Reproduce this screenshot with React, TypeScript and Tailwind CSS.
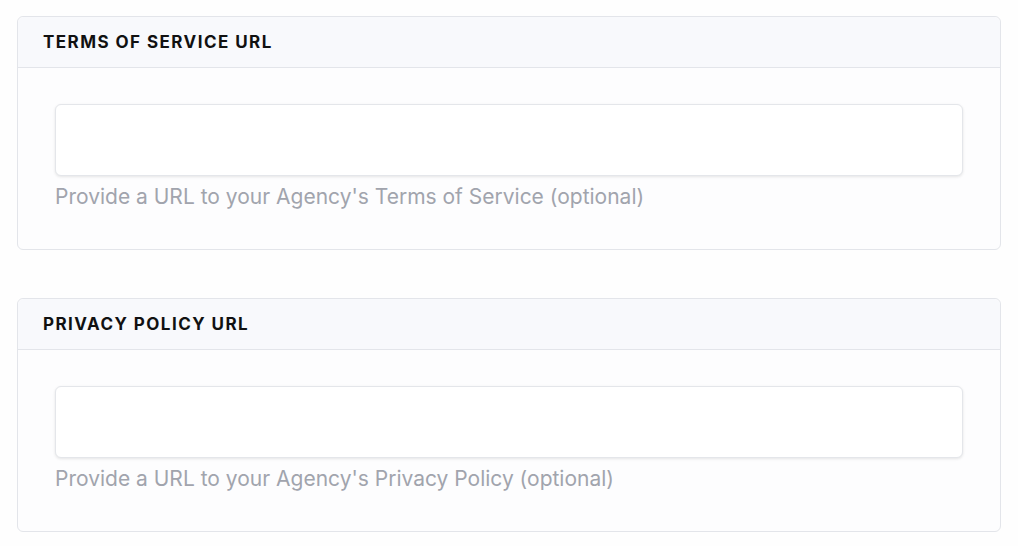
function UrlCard({ title, help }: { title: string; help: string }) {
  return (
    <div className="rounded-md border border-[#e3e5ea] bg-[#fdfdfe]">
      <div className="flex h-[51px] items-center rounded-t-md border-b border-[#e3e5ea] bg-[#f8f9fc] px-[25px] pt-[2px]">
        <h3 className="text-[17px] font-bold tracking-[0.085em] text-[#111]">{title}</h3>
      </div>
      <div className="px-[37px] pb-[38px] pt-[36px]">
        <input
          type="text"
          className="block h-[72px] w-full rounded-md border border-[#e4e6ea] bg-white shadow-[0_1px_3px_rgba(0,0,0,0.1)] outline-none"
        />
        <p className="mt-[6px] text-[21px] leading-[29px] text-[#a1a4ad]">{help}</p>
      </div>
    </div>
  );
}

export default function App() {
  return (
    <div
      className="flex min-h-[546px] flex-col gap-[48px] bg-[#fefefe] px-[17px] pt-[16px]"
      style={{ fontFamily: "Inter, 'Liberation Sans', sans-serif" }}
    >
      <UrlCard title="TERMS OF SERVICE URL" help="Provide a URL to your Agency's Terms of Service (optional)" />
      <UrlCard title="PRIVACY POLICY URL" help="Provide a URL to your Agency's Privacy Policy (optional)" />
    </div>
  );
}
